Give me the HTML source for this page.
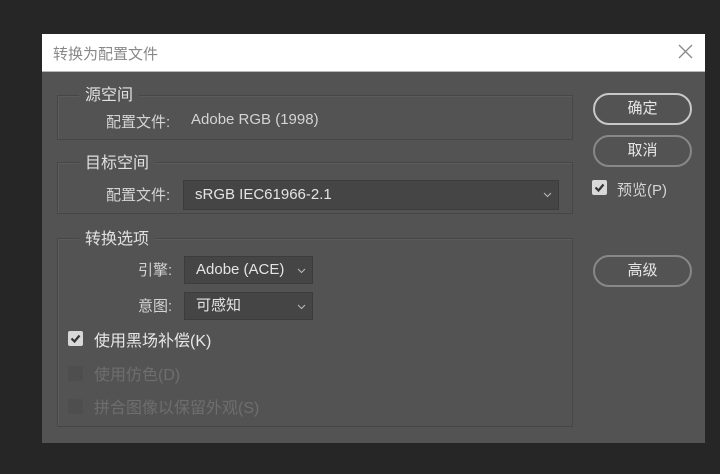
<!DOCTYPE html>
<html><head><meta charset="utf-8"><style>
*{margin:0;padding:0;box-sizing:border-box}
body{width:720px;height:474px;background:#262626;position:relative;overflow:hidden;font-family:"Liberation Sans","Noto Sans CJK SC",sans-serif;color:#d4d4d4;font-size:15px}
.a{position:absolute}
.dlg{left:42px;top:34px;width:663px;height:409px;background:#535353}
.title{left:42px;top:34px;width:663px;height:38px;background:#fff;border-bottom:1px solid #b8b8b8}
.grp{border:1px solid #464646;box-shadow:inset 1px 1px 0 #5c5c5c}
.leg{background:#535353;padding:0 6px;font-size:16px;color:#e0e0e0}
.dd{background:#454545;border:1px solid #3c3c3c;color:#e4e4e4;padding-left:11px;line-height:26px}
.dd svg{position:absolute;right:6px;top:11px}
.btn{border:2px solid #a8a8a8;border-radius:16px;text-align:center;color:#e6e6e6;font-size:15px}
.cb{width:15px;height:15px;border-radius:2px;background:#d8d8d8}
.cbd{width:15px;height:15px;border-radius:2px;background:#4e4e4e}
</style></head><body>
<div class="a dlg"></div>
<div class="a title"></div>
<div class="a" style="left:53px;top:43px;font-size:15px;color:#888">转换为配置文件</div>
<svg class="a" style="left:678px;top:44px" width="15" height="15"><path d="M1 1L14 14M14 1L1 14" stroke="#888" stroke-width="1.3"/></svg>

<div class="a grp" style="left:57px;top:95px;width:516px;height:45px"></div>
<div class="a leg" style="left:79px;top:81px">源空间</div>
<div class="a" style="left:106px;top:111px">配置文件:</div>
<div class="a" style="left:191px;top:111px">Adobe RGB (1998)</div>

<div class="a grp" style="left:57px;top:162px;width:516px;height:52px"></div>
<div class="a leg" style="left:79px;top:149px">目标空间</div>
<div class="a" style="left:106px;top:184px">配置文件:</div>
<div class="a dd" style="left:183px;top:180px;width:376px;height:30px;line-height:28px">sRGB IEC61966-2.1<svg width="9" height="6"><path d="M1 1L4.5 4.5L8 1" stroke="#bbb" fill="none"/></svg></div>

<div class="a grp" style="left:57px;top:238px;width:516px;height:189px"></div>
<div class="a leg" style="left:79px;top:225px">转换选项</div>
<div class="a" style="left:138px;top:259px">引擎:</div>
<div class="a dd" style="left:184px;top:256px;width:129px;height:28px">Adobe (ACE)<svg width="9" height="6"><path d="M1 1L4.5 4.5L8 1" stroke="#bbb" fill="none"/></svg></div>
<div class="a" style="left:138px;top:295px">意图:</div>
<div class="a dd" style="left:184px;top:292px;width:129px;height:28px">可感知<svg width="9" height="6"><path d="M1 1L4.5 4.5L8 1" stroke="#bbb" fill="none"/></svg></div>

<div class="a cb" style="left:68px;top:331px"><svg width="15" height="15"><path d="M3.5 7.5L6.5 10.5L11.5 4.5" stroke="#333" stroke-width="2.2" fill="none"/></svg></div>
<div class="a" style="left:94px;top:327px;font-size:16px;color:#e6e6e6">使用黑场补偿(K)</div>
<div class="a cbd" style="left:68px;top:366px"></div>
<div class="a" style="left:94px;top:361px;font-size:16px;color:#6e6e6e">使用仿色(D)</div>
<div class="a cbd" style="left:68px;top:399px"></div>
<div class="a" style="left:94px;top:394px;font-size:16px;color:#6e6e6e">拼合图像以保留外观(S)</div>

<div class="a btn" style="left:593px;top:93px;width:99px;height:32px;line-height:28px;border-color:#c8c8c8">确定</div>
<div class="a btn" style="left:593px;top:135px;width:99px;height:32px;line-height:28px;border-color:#888">取消</div>
<div class="a cb" style="left:592px;top:180px"><svg width="15" height="15"><path d="M3.5 7.5L6.5 10.5L11.5 4.5" stroke="#333" stroke-width="2.2" fill="none"/></svg></div>
<div class="a" style="left:617px;top:179px;font-size:15px">预览(P)</div>
<div class="a btn" style="left:593px;top:255px;width:99px;height:32px;line-height:28px;border-color:#888">高级</div>
</body></html>
